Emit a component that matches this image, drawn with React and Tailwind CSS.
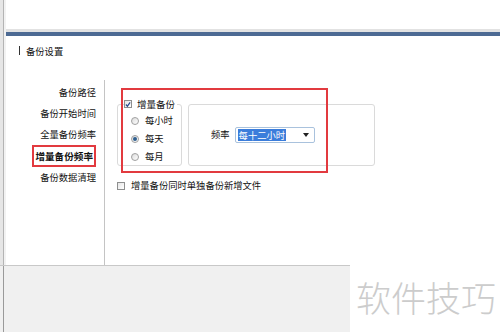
import React from "react";

const font = { fontFamily: '"Noto Sans CJK SC", "Noto Sans", sans-serif' };

function CheckBox({ checked }) {
  return (
    <div className="w-[8px] h-[8px] border border-[#8e8f8f] bg-gradient-to-br from-[#e6e6e6] to-white flex items-center justify-center shrink-0">
      {checked && (
        <svg width="7" height="7" viewBox="0 0 7 7">
          <path d="M1 3.5 L2.8 5.5 L6 1" stroke="#2a4b8d" strokeWidth="1.4" fill="none" />
        </svg>
      )}
    </div>
  );
}

function Radio({ checked }) {
  return (
    <div className="w-[8px] h-[8px] rounded-full border border-[#a0a0a0] bg-gradient-to-br from-[#dcdcdc] to-white flex items-center justify-center shrink-0">
      {checked && <div className="w-[4px] h-[4px] rounded-full bg-[#2f5f8f]" />}
    </div>
  );
}

export default function App() {
  return (
    <div className="w-[500px] h-[332px] bg-white flex flex-col overflow-hidden text-[#111]" style={font}>
      <div className="flex h-[265px]">
        <div className="w-[6px] flex shrink-0">
          <div className="w-[3px] bg-[#e6e6e6]" />
          <div className="w-px bg-[#b4b4b4]" />
          <div className="w-[2px] bg-[#f2f2f2]" />
        </div>
        <div className="flex-1 flex flex-col">
          <div className="h-[29px]" />
          <div className="h-[3px] bg-[#e2e2e2]" />
          <div className="h-[4px] bg-[#4d6a93]" />
          <div className="h-[44px] pl-[13px] pt-[9px] flex items-start gap-[6px]">
            <div className="w-px h-[9px] mt-[1px] bg-[#333]" />
            <span className="text-[9.3px] leading-[12px]">备份设置</span>
          </div>
          <div className="flex-1 flex">
            <div className="w-[98px] flex flex-col items-end pr-[8px] pt-[2px] text-[9.3px]">
              <div className="h-[21px] flex items-center">备份路径</div>
              <div className="h-[21px] flex items-center">备份开始时间</div>
              <div className="h-[21px] flex items-center">全量备份频率</div>
              <div className="h-[22px] flex items-center border-2 border-[#e23a3f] px-[1px] font-bold text-[9.6px]">增量备份频率</div>
              <div className="h-[21px] flex items-center">备份数据清理</div>
            </div>
            <div className="w-px bg-[#c4c4c4]" />
            <div className="flex-1 relative pl-[12px] pt-[24px] text-[9.3px]">
              <div className="flex gap-[6px]">
                <div className="w-[65px] h-[62px] border border-[#dadada] rounded-[3px]">
                  <div className="-mt-[7px] ml-[6px] w-fit pr-[2px] bg-white flex items-center gap-[5px] h-[12px]">
                    <CheckBox checked />
                    <span className="leading-[12px] text-[9.5px]">增量备份</span>
                  </div>
                  <div className="mt-[2px] flex flex-col pl-[13px]">
                    <div className="h-[18px] flex items-center gap-[6px]"><Radio /><span>每小时</span></div>
                    <div className="h-[18px] flex items-center gap-[6px]"><Radio checked /><span>每天</span></div>
                    <div className="h-[18px] flex items-center gap-[6px]"><Radio /><span>每月</span></div>
                  </div>
                </div>
                <div className="w-[187px] h-[62px] border border-[#dadada] rounded-[3px] flex items-center pl-[22px] gap-[5px]">
                  <span>频率</span>
                  <div className="w-[80px] h-[16px] border border-[#a9c2dd] rounded-[2px] bg-white flex items-center pl-[2px] pr-[5px] justify-between">
                    <span className="bg-[#3b7ddb] text-white leading-[12px] px-[1px]">每十二小时</span>
                    <svg width="6" height="4" viewBox="0 0 6 4"><path d="M0 0 H6 L3 4 Z" fill="#222" /></svg>
                  </div>
                </div>
              </div>
              <div className="mt-[14px] h-[12px] flex items-center gap-[6px]">
                <CheckBox />
                <span>增量备份同时单独备份新增文件</span>
              </div>
              <div className="absolute left-[16px] top-[8px] w-[207px] h-[85px] border-2 border-[#e23a3f]" />
            </div>
          </div>
        </div>
      </div>
      <div className="flex-1 flex">
        <div className="w-[350px] bg-[#f0f0f0] border-t border-[#c8c8c8] flex">
          <div className="w-[3px]" />
          <div className="w-px bg-[#9a9a9a]" />
        </div>
        <div className="flex-1 bg-white pl-[6px] pt-[13px]">
          <div className="text-[35px] leading-[38px] font-light text-[#cccccc] whitespace-nowrap">软件技巧</div>
        </div>
      </div>
    </div>
  );
}
